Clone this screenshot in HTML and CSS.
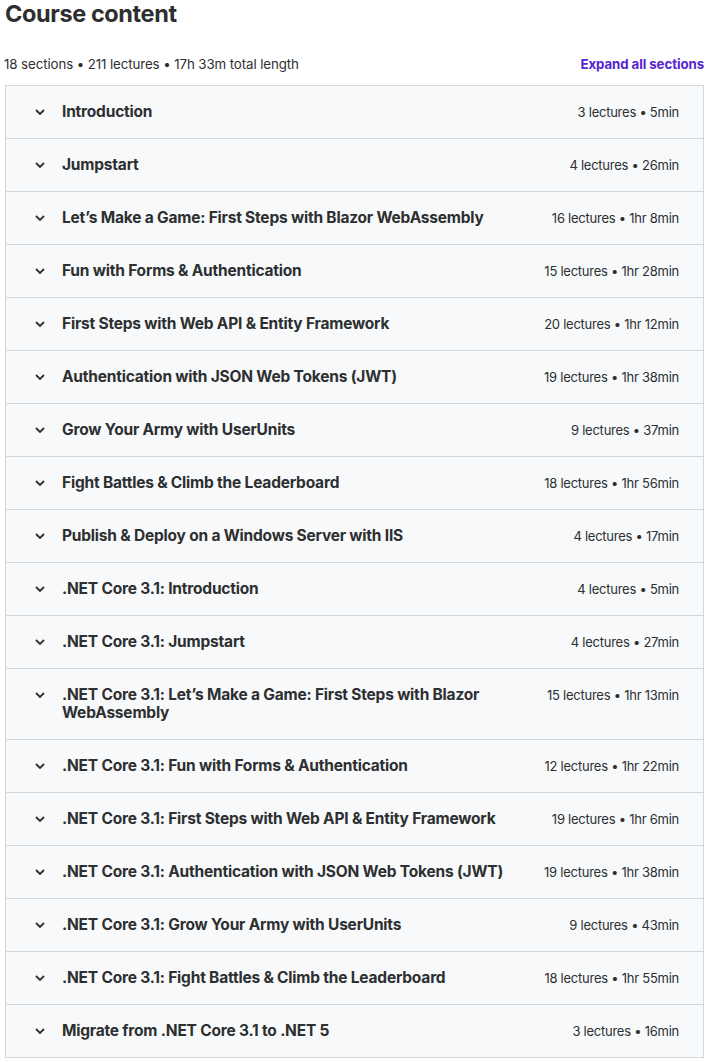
FILE: index.html
```html
<!DOCTYPE html>
<html>
<head>
<meta charset="utf-8">
<link rel="stylesheet" href="styles.css">
</head>
<body>
<div class="page">
  <h2 class="title">Course content</h2>
  <div class="meta">
    <span class="summary">18 sections • 211 lectures • 17h 33m total length</span>
    <a class="expand">Expand all sections</a>
  </div>
  <div class="sections">
    <div class="row"><svg class="chev" viewBox="0 0 10 6"><path d="M1 1l4 4 4-4"/></svg><span class="name">Introduction</span><span class="stats">3 lectures • 5min</span></div>
    <div class="row"><svg class="chev" viewBox="0 0 10 6"><path d="M1 1l4 4 4-4"/></svg><span class="name">Jumpstart</span><span class="stats">4 lectures • 26min</span></div>
    <div class="row"><svg class="chev" viewBox="0 0 10 6"><path d="M1 1l4 4 4-4"/></svg><span class="name">Let’s Make a Game: First Steps with Blazor WebAssembly</span><span class="stats">16 lectures • 1hr 8min</span></div>
    <div class="row"><svg class="chev" viewBox="0 0 10 6"><path d="M1 1l4 4 4-4"/></svg><span class="name">Fun with Forms &amp; Authentication</span><span class="stats">15 lectures • 1hr 28min</span></div>
    <div class="row"><svg class="chev" viewBox="0 0 10 6"><path d="M1 1l4 4 4-4"/></svg><span class="name">First Steps with Web API &amp; Entity Framework</span><span class="stats">20 lectures • 1hr 12min</span></div>
    <div class="row"><svg class="chev" viewBox="0 0 10 6"><path d="M1 1l4 4 4-4"/></svg><span class="name">Authentication with JSON Web Tokens (JWT)</span><span class="stats">19 lectures • 1hr 38min</span></div>
    <div class="row"><svg class="chev" viewBox="0 0 10 6"><path d="M1 1l4 4 4-4"/></svg><span class="name">Grow Your Army with UserUnits</span><span class="stats">9 lectures • 37min</span></div>
    <div class="row"><svg class="chev" viewBox="0 0 10 6"><path d="M1 1l4 4 4-4"/></svg><span class="name">Fight Battles &amp; Climb the Leaderboard</span><span class="stats">18 lectures • 1hr 56min</span></div>
    <div class="row"><svg class="chev" viewBox="0 0 10 6"><path d="M1 1l4 4 4-4"/></svg><span class="name">Publish &amp; Deploy on a Windows Server with IIS</span><span class="stats">4 lectures • 17min</span></div>
    <div class="row"><svg class="chev" viewBox="0 0 10 6"><path d="M1 1l4 4 4-4"/></svg><span class="name">.NET Core 3.1: Introduction</span><span class="stats">4 lectures • 5min</span></div>
    <div class="row"><svg class="chev" viewBox="0 0 10 6"><path d="M1 1l4 4 4-4"/></svg><span class="name">.NET Core 3.1: Jumpstart</span><span class="stats">4 lectures • 27min</span></div>
    <div class="row"><svg class="chev" viewBox="0 0 10 6"><path d="M1 1l4 4 4-4"/></svg><span class="name">.NET Core 3.1: Let’s Make a Game: First Steps with Blazor WebAssembly</span><span class="stats">15 lectures • 1hr 13min</span></div>
    <div class="row"><svg class="chev" viewBox="0 0 10 6"><path d="M1 1l4 4 4-4"/></svg><span class="name">.NET Core 3.1: Fun with Forms &amp; Authentication</span><span class="stats">12 lectures • 1hr 22min</span></div>
    <div class="row"><svg class="chev" viewBox="0 0 10 6"><path d="M1 1l4 4 4-4"/></svg><span class="name">.NET Core 3.1: First Steps with Web API &amp; Entity Framework</span><span class="stats">19 lectures • 1hr 6min</span></div>
    <div class="row"><svg class="chev" viewBox="0 0 10 6"><path d="M1 1l4 4 4-4"/></svg><span class="name">.NET Core 3.1: Authentication with JSON Web Tokens (JWT)</span><span class="stats">19 lectures • 1hr 38min</span></div>
    <div class="row"><svg class="chev" viewBox="0 0 10 6"><path d="M1 1l4 4 4-4"/></svg><span class="name">.NET Core 3.1: Grow Your Army with UserUnits</span><span class="stats">9 lectures • 43min</span></div>
    <div class="row"><svg class="chev" viewBox="0 0 10 6"><path d="M1 1l4 4 4-4"/></svg><span class="name">.NET Core 3.1: Fight Battles &amp; Climb the Leaderboard</span><span class="stats">18 lectures • 1hr 55min</span></div>
    <div class="row"><svg class="chev" viewBox="0 0 10 6"><path d="M1 1l4 4 4-4"/></svg><span class="name">Migrate from .NET Core 3.1 to .NET 5</span><span class="stats">3 lectures • 16min</span></div>
  </div>
</div>
</body>
</html>
```

FILE: styles.css
```css
html, body {
  margin: 0;
  padding: 0;
  background: #ffffff;
}
body {
  font-family: Inter, "Noto Sans", Roboto, sans-serif;
  color: #2d2f31;
}
.page {
  padding: 0 5px 0 5px;
}
.title {
  margin: 0;
  font-size: 23.5px;
  font-weight: 700;
  line-height: 28px;
  letter-spacing: -0.4px;
}
.meta {
  display: flex;
  justify-content: space-between;
  align-items: center;
  margin-top: 22px;
  height: 28px;
  margin-bottom: 7px;
  font-size: 13.3px;
}
.summary {
  margin-left: -1px;
  letter-spacing: -0.1px;
}
.expand {
  color: #5624d0;
  font-weight: 700;
  font-size: 13.3px;
  letter-spacing: -0.1px;
}
.sections {
  border: 1px solid #d1d7dc;
  border-bottom: none;
}
.row {
  display: flex;
  align-items: baseline;
  background: #f7f9fa;
  border-bottom: 1px solid #d1d7dc;
  padding: 17px 24px 17px 29px;
  line-height: 18px;
}
.chev {
  align-self: flex-start;
  width: 10px;
  height: 6px;
  flex: none;
  margin-top: 6px;
  margin-right: 17px;
  fill: none;
  stroke: #2d2f31;
  stroke-width: 1.8;
}
.name {
  flex: 1;
  font-weight: 700;
  font-size: 15.5px;
  letter-spacing: -0.2px;
}
.stats {
  flex: none;
  margin-left: 16px;
  font-size: 13px;
  letter-spacing: -0.25px;
}
```
